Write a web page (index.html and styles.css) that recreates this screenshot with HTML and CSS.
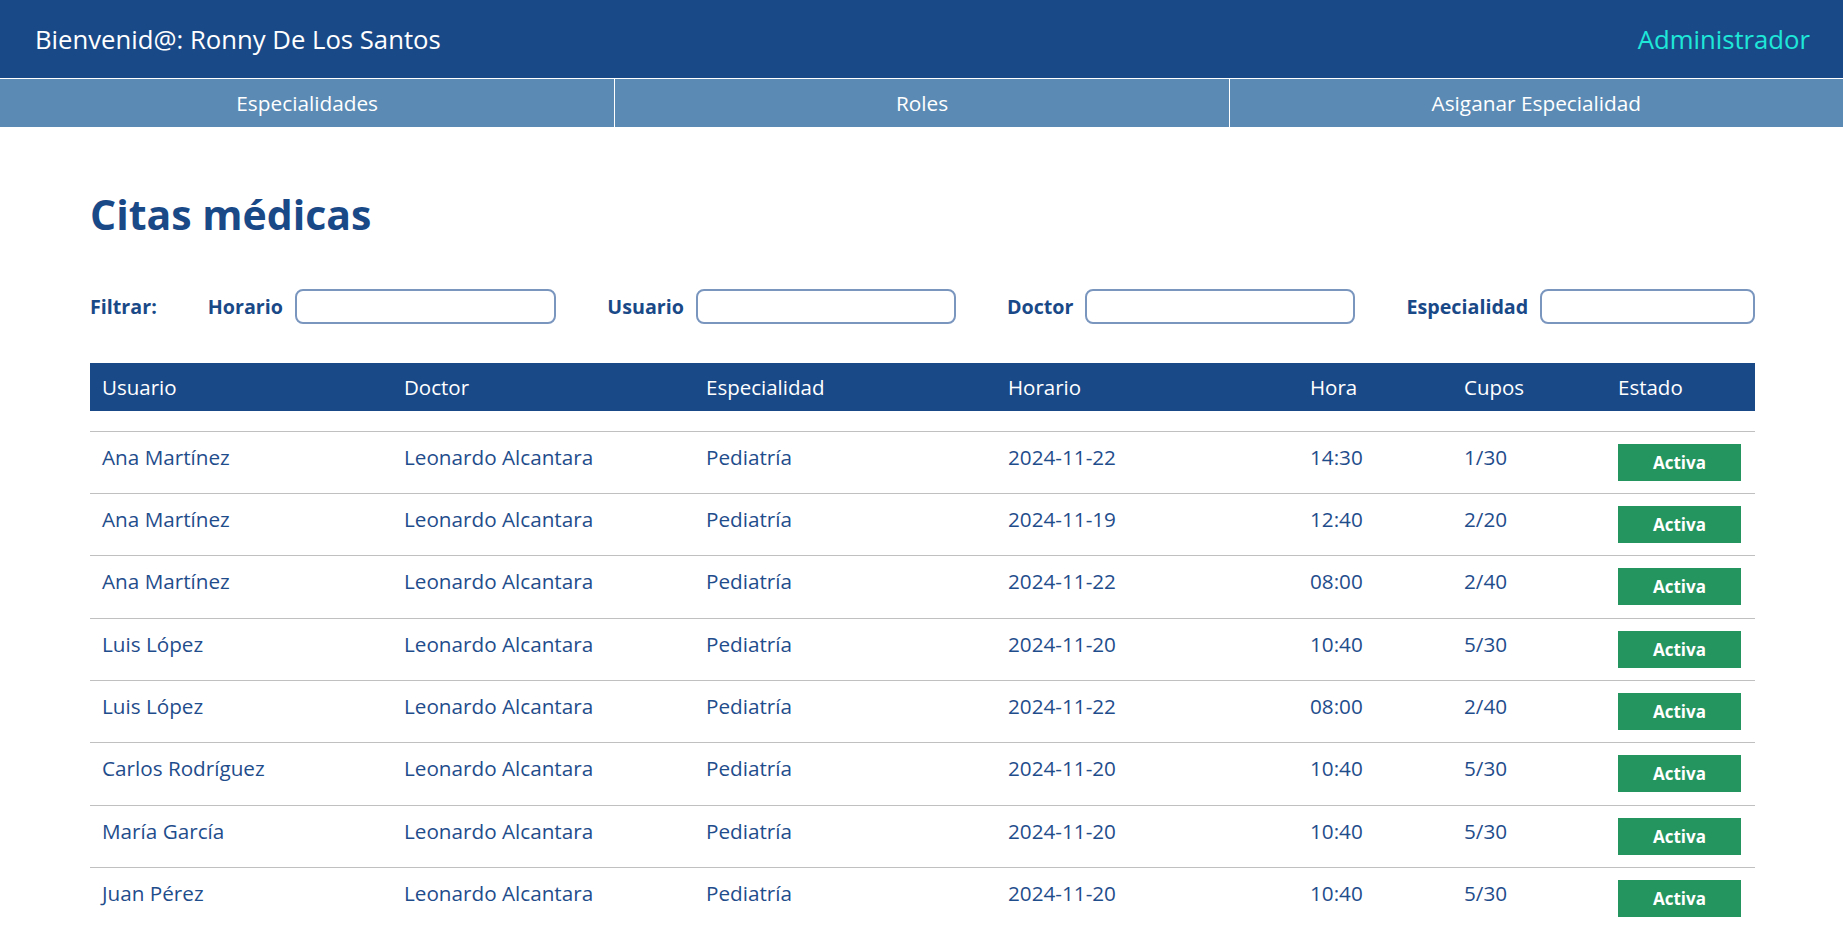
FILE: index.html
```html
<!DOCTYPE html>
<html lang="es">
<head>
<meta charset="utf-8">
<title>Citas médicas</title>
<link rel="stylesheet" href="styles.css">
</head>
<body>
<header class="topbar">
  <span class="welcome">Bienvenid@: Ronny De Los Santos</span>
  <span class="role">Administrador</span>
</header>
<nav class="menu">
  <a class="menu-item" href="#">Especialidades</a>
  <a class="menu-item" href="#">Roles</a>
  <a class="menu-item" href="#">Asiganar Especialidad</a>
</nav>
<main class="content">
  <h1 class="title">Citas médicas</h1>
  <div class="filters">
    <span class="filter-title">Filtrar:</span>
    <label class="filter"><span class="filter-label">Horario</span><input class="filter-input" type="text"></label>
    <label class="filter"><span class="filter-label">Usuario</span><input class="filter-input" type="text"></label>
    <label class="filter"><span class="filter-label">Doctor</span><input class="filter-input" type="text"></label>
    <label class="filter"><span class="filter-label">Especialidad</span><input class="filter-input" type="text"></label>
  </div>
  <table class="grid">
    <colgroup>
      <col class="col-wide"><col class="col-wide"><col class="col-wide"><col class="col-wide">
      <col class="col-narrow"><col class="col-narrow"><col>
    </colgroup>
    <thead>
      <tr><th>Usuario</th><th>Doctor</th><th>Especialidad</th><th>Horario</th><th>Hora</th><th>Cupos</th><th>Estado</th></tr>
    </thead>
    <tbody>
      <tr class="spacer"><td colspan="7"></td></tr>
      <tr><td>Ana Martínez</td><td>Leonardo Alcantara</td><td>Pediatría</td><td>2024-11-22</td><td>14:30</td><td>1/30</td><td><span class="badge">Activa</span></td></tr>
      <tr><td>Ana Martínez</td><td>Leonardo Alcantara</td><td>Pediatría</td><td>2024-11-19</td><td>12:40</td><td>2/20</td><td><span class="badge">Activa</span></td></tr>
      <tr><td>Ana Martínez</td><td>Leonardo Alcantara</td><td>Pediatría</td><td>2024-11-22</td><td>08:00</td><td>2/40</td><td><span class="badge">Activa</span></td></tr>
      <tr><td>Luis López</td><td>Leonardo Alcantara</td><td>Pediatría</td><td>2024-11-20</td><td>10:40</td><td>5/30</td><td><span class="badge">Activa</span></td></tr>
      <tr><td>Luis López</td><td>Leonardo Alcantara</td><td>Pediatría</td><td>2024-11-22</td><td>08:00</td><td>2/40</td><td><span class="badge">Activa</span></td></tr>
      <tr><td>Carlos Rodríguez</td><td>Leonardo Alcantara</td><td>Pediatría</td><td>2024-11-20</td><td>10:40</td><td>5/30</td><td><span class="badge">Activa</span></td></tr>
      <tr><td>María García</td><td>Leonardo Alcantara</td><td>Pediatría</td><td>2024-11-20</td><td>10:40</td><td>5/30</td><td><span class="badge">Activa</span></td></tr>
      <tr><td>Juan Pérez</td><td>Leonardo Alcantara</td><td>Pediatría</td><td>2024-11-20</td><td>10:40</td><td>5/30</td><td><span class="badge">Activa</span></td></tr>
    </tbody>
  </table>
</main>
</body>
</html>
```

FILE: styles.css
```css
* { box-sizing: border-box; }

body {
  margin: 0;
  font-family: "Open Sans", "Noto Sans", sans-serif;
  color: #1a4988;
  background: #ffffff;
}

.topbar {
  height: 78px;
  background: #1a4988;
  display: flex;
  align-items: center;
  justify-content: space-between;
  padding: 0 33px 0 35px;
  border-bottom: 1px solid #ffffff;
  font-size: 25.7px;
  box-sizing: content-box;
}

.welcome { color: #ffffff; }
.role { color: #1ee8d8; }

.menu {
  display: grid;
  grid-template-columns: 1fr 1fr 1fr;
  height: 48px;
  background: #5b8bb4;
}

.menu-item {
  display: flex;
  align-items: center;
  justify-content: center;
  color: #ffffff;
  text-decoration: none;
  font-size: 20.8px;
}

.menu-item + .menu-item { border-left: 1px solid #ffffff; }

.content {
  padding: 0 88px 0 90px;
}

.title {
  margin: 0;
  padding-top: 59px;
  font-size: 41px;
  font-weight: 700;
  line-height: 56px;
  color: #1a4988;
}

.filters {
  display: flex;
  align-items: center;
  gap: 51px;
  margin-top: 47px;
}

.filter-title,
.filter-label {
  font-weight: 700;
  font-size: 19.7px;
  color: #1a4988;
}

.filter {
  flex: 1;
  display: flex;
  align-items: center;
  gap: 12px;
}

.filter-input {
  flex: 1;
  min-width: 0;
  height: 35px;
  border: 2px solid #7a96bf;
  border-radius: 8px;
  background: #ffffff;
  font: inherit;
}

.grid {
  width: 100%;
  margin-top: 39px;
  border-collapse: collapse;
  table-layout: fixed;
}

.col-wide { width: 302px; }
.col-narrow { width: 154px; }

.grid th {
  background: #1a4988;
  color: #ffffff;
  font-weight: 400;
  font-size: 20.5px;
  text-align: left;
  height: 48px;
  padding: 0 12px;
}

.grid .spacer td {
  height: 20px;
  padding: 0;
  border: none;
}

.grid td {
  font-size: 20.7px;
  color: #1f4d8c;
  height: 62.4px;
  padding: 11px 12px 0;
  vertical-align: top;
  border-top: 1px solid #c0c0c0;
}

.badge {
  display: flex;
  align-items: center;
  justify-content: center;
  width: 123px;
  height: 37px;
  margin-top: 1px;
  background: #24955f;
  color: #ffffff;
  font-weight: 700;
  font-size: 17px;
}
```
